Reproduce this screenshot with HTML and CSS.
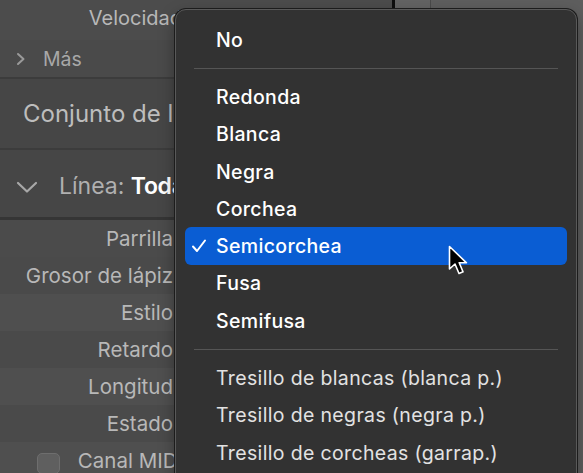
FILE: index.html
```html
<!DOCTYPE html>
<html>
<head>
<meta charset="utf-8">
<link rel="stylesheet" href="styles.css">
</head>
<body>
<div class="app">
  <div class="inspector">
    <div class="row r-top"><span class="label">Velocidad</span></div>
    <div class="row r-more">
      <svg class="chev-r" width="10" height="14" viewBox="0 0 10 14"><path d="M2 2 L7.5 7 L2 12" fill="none" stroke="#9a9a9a" stroke-width="2" stroke-linecap="round" stroke-linejoin="round"/></svg>
      <span class="more-text">Más</span>
    </div>
    <div class="section s-set"><span>Conjunto de líneas</span></div>
    <div class="section s-line">
      <svg class="chev-d" width="22" height="14" viewBox="0 0 22 14"><path d="M2 3 L11 11.5 L20 3" fill="none" stroke="#a8a8a8" stroke-width="2.2" stroke-linecap="round" stroke-linejoin="round"/></svg>
      <span class="line-label">Línea: </span><span class="line-value">Todas</span>
    </div>
    <div class="props">
      <div class="prop p-a"><span class="label">Parrilla</span></div>
      <div class="prop p-b"><span class="label">Grosor de lápiz</span></div>
      <div class="prop p-a"><span class="label">Estilo</span></div>
      <div class="prop p-b"><span class="label">Retardo</span></div>
      <div class="prop p-a"><span class="label">Longitud</span></div>
      <div class="prop p-b"><span class="label">Estado</span></div>
      <div class="prop p-a p-check"><span class="check-box"></span><span class="label">Canal MIDI</span></div>
    </div>
  </div>
  <div class="divider"></div>
  <div class="pane">
    <div class="pane-col"></div>
  </div>

  <div class="menu">
    <div class="item">No</div>
    <div class="sep"></div>
    <div class="item">Redonda</div>
    <div class="item">Blanca</div>
    <div class="item">Negra</div>
    <div class="item">Corchea</div>
    <div class="item selected">
      <svg class="tick" width="16" height="14" viewBox="0 0 16 14"><path d="M2 7.5 L6 12 L14 1.5" fill="none" stroke="#ffffff" stroke-width="2" stroke-linecap="round" stroke-linejoin="round"/></svg>
      Semicorchea
    </div>
    <div class="item">Fusa</div>
    <div class="item">Semifusa</div>
    <div class="sep"></div>
    <div class="item light">Tresillo de blancas (blanca p.)</div>
    <div class="item light">Tresillo de negras (negra p.)</div>
    <div class="item light">Tresillo de corcheas (garrap.)</div>
  </div>

  <svg class="cursor" width="26" height="34" viewBox="0 0 26 34">
    <path d="M1.5 1.5 L1.5 24 L7 19 L11 28.5 L15 26.8 L11.2 17.8 L18.5 17.8 Z" fill="#000" stroke="#fff" stroke-width="1.6" stroke-linejoin="round"/>
  </svg>
</div>
</body>
</html>
```
FILE: styles.css
```css
* { box-sizing: border-box; }
html, body {
  margin: 0;
  padding: 0;
  width: 583px;
  height: 473px;
  overflow: hidden;
  background: #5c5c5c;
  font-family: Inter, "Noto Sans", "Liberation Sans", sans-serif;
}
.app {
  position: relative;
  width: 583px;
  height: 473px;
  display: flex;
  overflow: hidden;
}
.inspector {
  width: 392px;
  flex: none;
  display: flex;
  flex-direction: column;
  background: #474747;
}
.inspector > * { flex: none; }
.label {
  color: #b8b8b8;
  font-size: 20.5px;
  white-space: nowrap;
}
.row {
  display: flex;
  align-items: center;
}
.r-top {
  height: 40px;
  justify-content: flex-end;
  padding-right: 210px;
  background: #4c4c4c;
  padding-bottom: 4px;
}
.r-top .label { font-size: 20px; }
.r-more {
  height: 39px;
  background: #4a4a4a;
  padding-left: 16px;
  gap: 17px;
  border-bottom: 2px solid #3c3c3c;
}
.more-text {
  color: #a8a8a8;
  font-size: 19.5px;
}
.section {
  display: flex;
  align-items: center;
  background: #464646;
  border-bottom: 2px solid #3c3c3c;
  white-space: nowrap;
}
.s-set {
  height: 71px;
  padding-left: 23px;
  color: #bdbdbd;
  font-size: 24px;
}
.s-line {
  height: 70px;
  padding-left: 16px;
  padding-top: 4px;
  font-size: 23px;
  border-bottom: 3px solid #353535;
}
.chev-d { margin-right: 21px; margin-top: 2px; }
.line-label { color: #b0b0b0; white-space: pre; }
.line-value { color: #ffffff; font-weight: 600; letter-spacing: -0.3px; }
.props {
  display: flex;
  flex-direction: column;
}
.prop {
  height: 37px;
  flex: none;
  display: flex;
  align-items: center;
  justify-content: flex-end;
  padding-right: 219px;
}
.p-a { background: #4f4f4f; }
.p-b { background: #4a4a4a; }
.prop:first-child { background: #4b4b4b; }
.prop.p-check {
  justify-content: space-between;
  padding-left: 37px;
  padding-right: 209px;
}
.check-box {
  width: 23px;
  height: 21px;
  border-radius: 5px;
  background: #5f5f5f;
  border: 1px solid #6e6e6e;
  margin-top: 6px;
}
.divider {
  width: 3px;
  flex: none;
  background: #0e0e0e;
}
.pane {
  flex: 1;
  background: #5e5e5e;
  display: flex;
  justify-content: flex-start;
}
.pane-col {
  width: 36px;
  border-right: 1px solid #4a4a4a;
  background: #636363;
}
.menu {
  position: absolute;
  left: 175px;
  top: 9px;
  width: 402px;
  height: 480px;
  background: #323232;
  border: 1px solid #595959;
  border-radius: 11px;
  box-shadow: 0 0 0 1px #1c1c1c, 0 6px 16px rgba(0,0,0,0.35);
  padding: 11px 9px 0 9px;
  display: flex;
  flex-direction: column;
}
.item {
  height: 37.3px;
  flex: none;
  display: flex;
  align-items: center;
  padding-left: 31px;
  color: #ffffff;
  font-size: 19.5px;
  font-weight: 500;
  letter-spacing: 0.35px;
  border-radius: 6px;
  position: relative;
  white-space: nowrap;
}
.item.light {
  color: #e2e2e2;
  font-weight: 400;
}
.item.selected {
  background: #0a5dd3;
}
.tick {
  position: absolute;
  left: 6px;
  top: 12px;
}
.sep {
  height: 20px;
  flex: none;
  margin: 0 9px;
  display: flex;
  align-items: center;
}
.sep::before {
  content: "";
  display: block;
  width: 100%;
  height: 1px;
  background: #555555;
}
.cursor {
  position: absolute;
  left: 448px;
  top: 245px;
}
```
